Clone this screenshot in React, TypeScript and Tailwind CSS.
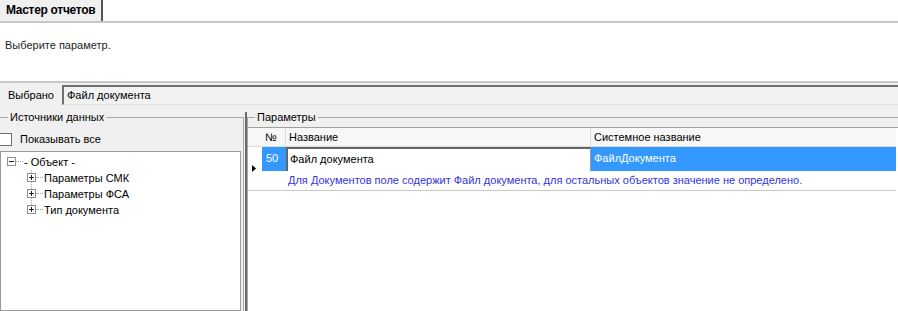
import React from "react";

function TreeBox({ open, last, root }: { open?: boolean; last?: boolean; root?: boolean }) {
  return (
    <svg width="16" height="16" viewBox="0 0 16 16" className="shrink-0">
      {!root && (
        <line x1="4.5" y1="0" x2="4.5" y2={last ? 7.5 : 16} stroke="#a0a0a0" strokeDasharray="1 1" />
      )}
      <line x1="9" y1="7.5" x2="16" y2="7.5" stroke="#a0a0a0" strokeDasharray="1 1" />
      <rect x="0.5" y="3.5" width="8" height="8" fill="#fff" stroke="#919191" />
      <line x1="2" y1="7.5" x2="7" y2="7.5" stroke="#222" />
      {!open && <line x1="4.5" y1="5" x2="4.5" y2="10" stroke="#222" />}
    </svg>
  );
}

const children = ["Параметры СМК", "Параметры ФСА", "Тип документа"];

export default function App() {
  return (
    <div className="w-[898px] h-[311px] overflow-hidden bg-white flex flex-col text-[11px] text-black font-['Liberation_Sans',Arial,sans-serif] leading-[13px]">
      {/* tab header */}
      <div className="flex h-[23px] shrink-0 border-b-2 border-[#c8c8c8]">
        <div className="w-[103px] bg-[#f0f0f0] border-r-2 border-[#555] font-bold text-[12px] tracking-[-0.3px] pl-[6px] leading-[21px] whitespace-nowrap">
          Мастер отчетов
        </div>
      </div>

      <div className="h-[58px] shrink-0 pt-[16px] px-[5px] text-[#1e1e1e]">Выберите параметр.</div>
      <div className="h-[2px] shrink-0 bg-[#c8c8c8]" />

      <div className="flex-1 bg-[#f0f0f0] flex flex-col min-h-0">
        {/* selected row */}
        <div className="mt-[2px] h-[20px] flex items-center shrink-0">
          <div className="w-[62px] pl-[8px]">Выбрано</div>
          <div className="flex-1 h-[20px] border-t-2 border-l-2 border-t-[#6e6e6e] border-l-[#6e6e6e] border-b border-b-[#e3e3e3] pl-[3px] leading-[17px] bg-[#f2f2f2]">
            Файл документа
          </div>
        </div>

        <div className="flex flex-1 mt-[6px] min-h-0">
          {/* data sources */}
          <fieldset className="w-[244px] shrink-0 border-t border-r border-[#a9a9a9] flex flex-col min-h-0">
            <legend className="ml-[8px] px-[2px] leading-[13px]">Источники данных</legend>
            <div className="flex items-center mt-[8px] h-[14px]">
              <div className="ml-[-1px] w-[13px] h-[13px] border border-[#707070] bg-white" />
              <span className="ml-[8px]">Показывать все</span>
            </div>
            <div className="mt-[5px] mr-[2px] flex-1 bg-white border border-[#9a9a9a] pt-[2px]">
              <div className="flex items-center h-[16px] pl-[6px]">
                <TreeBox open root />
                <span className="ml-[1px]">- Объект -</span>
              </div>
              {children.map((c, i) => (
                <div key={c} className="flex items-center h-[16px] pl-[26px]">
                  <TreeBox last={i === children.length - 1} />
                  <span className="ml-[1px]">{c}</span>
                </div>
              ))}
            </div>
          </fieldset>

          <div className="w-[1px] shrink-0" />
          <div className="w-[2px] shrink-0 mt-[1px] bg-[#6a6a6a]" />

          {/* parameters */}
          <fieldset className="flex-1 border-t border-l border-[#a9a9a9] flex flex-col min-h-0">
            <legend className="ml-[7px] px-[2px] leading-[13px]">Параметры</legend>
            <div className="mt-[3px] flex-1 bg-white border-t border-[#a0a0a0]">
              <div className="grid grid-cols-[14px_24px_305px_305px] grid-rows-[19px_24px_20px]">
                <div className="bg-[#f7f7f7] border-b border-[#dcdcdc]" />
                <div className="bg-[#f7f7f7] border-b border-r border-[#dcdcdc] pl-[3px] leading-[18px]">№</div>
                <div className="bg-[#f7f7f7] border-b border-r border-[#dcdcdc] pl-[3px] leading-[18px]">Название</div>
                <div className="bg-[#f7f7f7] border-b border-[#dcdcdc] pl-[3px] leading-[18px]">Системное название</div>

                <div className="row-span-2 flex items-center pl-[4px] border-b border-[#c8c8c8]">
                  <svg width="4" height="7" viewBox="0 0 4 7">
                    <path d="M0 0 L4 3.5 L0 7 Z" fill="#000" />
                  </svg>
                </div>
                <div className="bg-[#3399ff] text-white pl-[4px] leading-[23px]">50</div>
                <div className="bg-white border-t-2 border-l-2 border-t-[#646464] border-l-[#646464] border-r border-r-[#9a9a9a] pl-[2px] leading-[20px]">
                  Файл документа
                </div>
                <div className="bg-[#3399ff] text-white pl-[3px] leading-[23px]">ФайлДокумента</div>

                <div className="col-span-3 pl-[26px] leading-[19px] text-[#3333e0] border-b border-[#c8c8c8]">
                  Для Документов поле содержит Файл документа, для остальных объектов значение не определено.
                </div>
              </div>
            </div>
          </fieldset>
        </div>
      </div>
    </div>
  );
}
